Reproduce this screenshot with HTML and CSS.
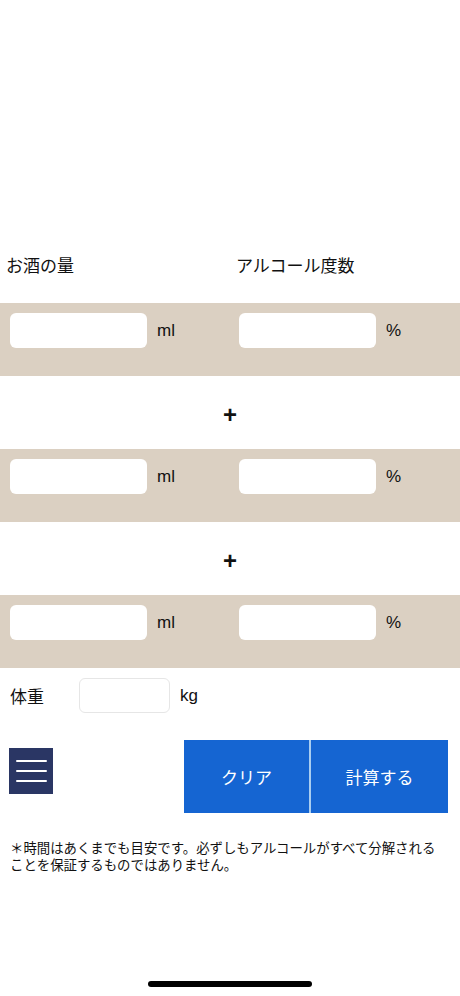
FILE: index.html
```html
<!DOCTYPE html>
<html lang="ja">
<head>
    <meta charset="UTF-8">
    <meta name="viewport" content="width=device-width, initial-scale=1.0">
    <title>アルコール分解時間</title>
    <link rel="stylesheet" href="styles.css">
</head>
<body>
    <div class="page">
        <div class="head">
            <div>お酒の量</div>
            <div>アルコール度数</div>
        </div>

        <div class="band">
            <div class="cell"><input type="number" class="field"><span class="unit">ml</span></div>
            <div class="cell"><input type="number" class="field"><span class="unit">%</span></div>
        </div>
        <div class="plus">+</div>
        <div class="band">
            <div class="cell"><input type="number" class="field"><span class="unit">ml</span></div>
            <div class="cell"><input type="number" class="field"><span class="unit">%</span></div>
        </div>
        <div class="plus">+</div>
        <div class="band">
            <div class="cell"><input type="number" class="field"><span class="unit">ml</span></div>
            <div class="cell"><input type="number" class="field"><span class="unit">%</span></div>
        </div>

        <div class="weight">
            <span class="weight-label">体重</span>
            <input type="number" class="weight-field">
            <span class="unit">kg</span>
        </div>

        <div class="actions">
            <button class="menu" aria-label="menu">
                <span></span><span></span><span></span>
            </button>
            <div class="buttons">
                <button class="btn btn-clear">クリア</button>
                <button class="btn btn-calc">計算する</button>
            </div>
        </div>

        <p class="note">＊時間はあくまでも目安です。必ずしもアルコールがすべて分解されることを保証するものではありません。</p>
    </div>
    <div class="home-bar"></div>
</body>
</html>
```

FILE: styles.css
```css
body {
    margin: 0;
    background-color: #fff;
    color: #111;
    font-family: "Liberation Sans", "Noto Sans CJK JP", sans-serif;
    height: 996px;
    position: relative;
    overflow: hidden;
}

.page {
    width: 460px;
    padding-top: 255px;
}

.head {
    display: grid;
    grid-template-columns: 230px 1fr;
    padding-left: 6px;
    font-size: 17px;
    line-height: 24px;
    margin-bottom: 24px;
}

.band {
    display: grid;
    grid-template-columns: 229px 1fr;
    height: 73px;
    background-color: #dbd0c2;
    box-sizing: border-box;
    padding-top: 10px;
}

.cell {
    display: flex;
    align-items: center;
    gap: 10px;
    padding-left: 10px;
    height: 35px;
}

.field {
    width: 137px;
    height: 35px;
    box-sizing: border-box;
    border: none;
    border-radius: 6px;
    background-color: #fff;
    padding: 0 8px;
    font-size: 17px;
}

.unit {
    font-size: 17px;
    line-height: 20px;
}

.plus {
    height: 73px;
    display: flex;
    align-items: center;
    justify-content: center;
    font-size: 24px;
    font-weight: bold;
    padding-top: 4px;
    box-sizing: border-box;
}

.weight {
    display: flex;
    align-items: center;
    padding: 10px 0 0 10px;
    height: 45px;
    box-sizing: border-box;
}

.weight-label {
    font-size: 17px;
    width: 69px;
}

.weight-field {
    width: 91px;
    height: 35px;
    box-sizing: border-box;
    border: 1px solid #e6e6e6;
    border-radius: 6px;
    margin-right: 10px;
    padding: 0 6px;
    font-size: 17px;
}

.actions {
    display: flex;
    justify-content: space-between;
    align-items: flex-start;
    margin-top: 27px;
    padding: 0 12px 0 9px;
}

.menu {
    width: 44px;
    height: 46px;
    margin-top: 8px;
    background-color: #2a3664;
    border: none;
    padding: 0;
    display: flex;
    flex-direction: column;
    justify-content: center;
    align-items: center;
    gap: 8px;
}

.menu span {
    display: block;
    width: 31px;
    height: 2px;
    background-color: #fff;
    border-radius: 1px;
}

.buttons {
    display: flex;
    gap: 2px;
    background-color: #a9cdf0;
}

.btn {
    height: 73px;
    border: none;
    background-color: #1565d2;
    color: #fff;
    font-family: "Liberation Sans", "Noto Sans CJK JP", sans-serif;
    font-size: 17px;
    padding: 0;
}

.btn-clear {
    width: 125px;
}

.btn-calc {
    width: 137px;
}

.note {
    margin: 27px 0 0;
    padding: 0 20px 0 10px;
    font-size: 13.4px;
    line-height: 17px;
    color: #111;
}

.home-bar {
    position: absolute;
    left: 148px;
    top: 981px;
    width: 164px;
    height: 6px;
    border-radius: 3px;
    background-color: #000;
}
```
